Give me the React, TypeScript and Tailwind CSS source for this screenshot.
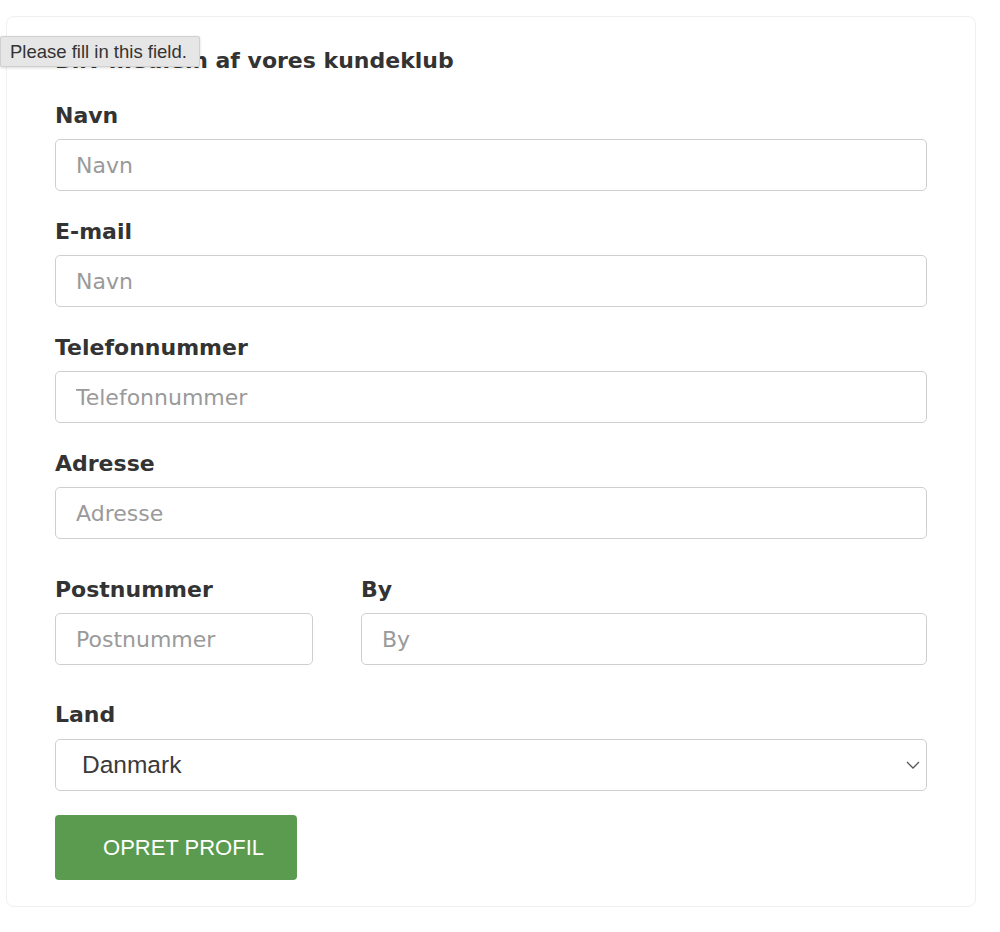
import React from "react";

const labelCls = "block text-[22px] font-bold leading-[28px] text-[#333]";
const inputCls =
  "mt-[9px] block h-[52px] w-full rounded-[5px] border border-[#cfcfcf] bg-white pl-[20px] text-[22px] text-[#333] outline-none placeholder:text-[#9a9a9a]";

function Field({ label, placeholder }: { label: string; placeholder: string }) {
  return (
    <div>
      <label className={labelCls}>{label}</label>
      <input className={inputCls} placeholder={placeholder} />
    </div>
  );
}

export default function App() {
  return (
    <div
      className="relative min-h-[932px] bg-white"
      style={{ fontFamily: '"DejaVu Sans", Verdana, sans-serif' }}
    >
      {/* native validation bubble sits over the heading */}
      <div className="absolute left-0 top-[36px] z-10 flex h-[31px] w-[200px] items-center rounded-[2px] border border-[#d0d0d0] bg-[#e6e6e6] pl-[9px] text-[18.5px] text-[#333] shadow-[0_1px_3px_rgba(0,0,0,0.15)] [font-family:'Liberation_Sans',Arial,sans-serif]">
        Please fill in this field.
      </div>

      <div className="ml-[6px] mr-[24px] pt-[16px]">
        <div className="rounded-[8px] border border-[#f0f0f0] px-[48px] pb-[26px] pt-[30px]">
          <h2 className="text-[22px] font-bold leading-[28px] text-[#333]">
            Bliv medlem af vores kundeklub
          </h2>

          <div className="mt-[27px] flex flex-col gap-[27px]">
            <Field label="Navn" placeholder="Navn" />
            <Field label="E-mail" placeholder="Navn" />
            <Field label="Telefonnummer" placeholder="Telefonnummer" />
            <Field label="Adresse" placeholder="Adresse" />
          </div>

          <div className="mt-[37px] flex gap-[48px]">
            <div className="w-[258px]">
              <label className={labelCls}>Postnummer</label>
              <input className={inputCls} placeholder="Postnummer" />
            </div>
            <div className="flex-1">
              <label className={labelCls}>By</label>
              <input className={inputCls} placeholder="By" />
            </div>
          </div>

          <div className="mt-[36px]">
            <label className={labelCls}>Land</label>
            <div className="relative mt-[10px]">
              <select
                className="block h-[52px] w-full appearance-none rounded-[5px] border border-[#cfcfcf] bg-white pl-[26px] text-[24.5px] text-[#3a3a3a] outline-none [font-family:'Liberation_Sans',Arial,sans-serif]"
                defaultValue="Danmark"
              >
                <option>Danmark</option>
                <option>Sverige</option>
                <option>Norge</option>
              </select>
              <svg
                className="pointer-events-none absolute right-[7px] top-[22px]"
                width="14"
                height="8"
                viewBox="0 0 14 8"
                fill="none"
              >
                <path d="M1 1l6 6 6-6" stroke="#555" strokeWidth="1.3" />
              </svg>
            </div>
          </div>

          <button className="mt-[24px] flex h-[65px] w-[242px] items-center justify-center rounded-[4px] bg-[#5a9b4f] pl-[15px] text-[22px] text-white [font-family:'Liberation_Sans',Arial,sans-serif]">
            OPRET PROFIL
          </button>
        </div>
      </div>
    </div>
  );
}
